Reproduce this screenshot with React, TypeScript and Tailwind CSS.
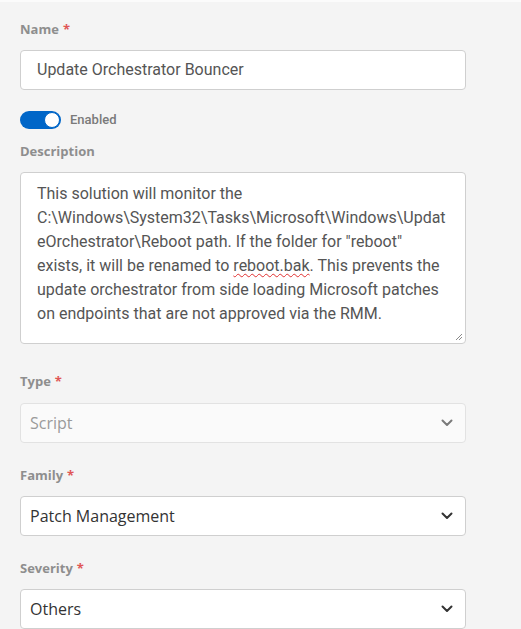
import type { ReactNode } from 'react'

const labelFont = { fontFamily: '"Open Sans", "Liberation Sans", sans-serif' }

function FieldLabel(props: { children: ReactNode; required?: boolean; className?: string }) {
  return (
    <div
      className={`h-5 text-[13px] font-bold leading-5 text-[#8e8e8e] ${props.className ?? ''}`}
      style={labelFont}
    >
      {props.children}
      {props.required && <span className="ml-1 text-[#e05656]">*</span>}
    </div>
  )
}

function Chevron(props: { color: string }) {
  return (
    <svg width="12" height="8" viewBox="0 0 12 8" fill="none" className="shrink-0">
      <path d="M1.5 1.5 L6 6 L10.5 1.5" stroke={props.color} strokeWidth="2" strokeLinecap="round" strokeLinejoin="round" />
    </svg>
  )
}

function SelectBox(props: { value: string; disabled?: boolean }) {
  const { value, disabled } = props
  return (
    <div
      className={`flex h-10 w-[446px] items-center justify-between rounded border pl-[9px] pr-3 text-base ${
        disabled ? 'border-[#e2e2e2] bg-[#fafafa] text-[#9a9a9a]' : 'border-[#cfcfcf] bg-white text-[#333]'
      }`}
      style={labelFont}
    >
      <span>{value}</span>
      <Chevron color={disabled ? '#7a7a7a' : '#333'} />
    </div>
  )
}

export default function App() {
  return (
    <div className="min-h-screen border-t-2 border-[#fbfbfb] bg-[#f4f4f4]" style={{ fontFamily: 'Roboto, "Liberation Sans", sans-serif' }}>
      <div className="px-5 pt-[17px]">
        <FieldLabel required>Name</FieldLabel>
        <div className="mt-[11px] flex h-10 w-[446px] items-center rounded border border-[#cfcfcf] bg-white px-4 text-base text-[#555]">
          Update Orchestrator Bouncer
        </div>

        <div className="mt-[21px] flex h-[18px] items-center gap-[9px]">
          <div className="flex h-[18px] w-[41px] items-center justify-end rounded-full bg-[#0066c8] px-px">
            <div className="h-4 w-4 rounded-full border border-[#0066c8] bg-white" />
          </div>
          <span className="text-[13px] font-medium text-[#7a7a7a]">Enabled</span>
        </div>

        <FieldLabel className="mt-3">Description</FieldLabel>
        <div className="relative mt-[11px] h-[172px] w-[446px] rounded border border-[#cfcfcf] bg-white pl-4 pr-[15px] pt-[9px] text-base leading-6 text-[#555] break-words">
          This solution will monitor the C:\Windows\System32\Tasks\Microsoft\Windows\UpdateOrchestrator\Reboot path. If the folder for "reboot" exists, it will be renamed to{' '}
          <span className="underline decoration-[#e03030] decoration-wavy decoration-1 underline-offset-2">reboot.bak</span>. This prevents the update orchestrator from side loading Microsoft patches on endpoints that are not approved via the RMM.
          <svg width="8" height="8" viewBox="0 0 8 8" className="absolute bottom-[2px] right-[2px]">
            <path d="M7 1 L1 7 M7 4 L4 7" stroke="#8a8a8a" strokeWidth="1" />
          </svg>
        </div>

        <FieldLabel required className="mt-[27px]">Type</FieldLabel>
        <div className="mt-3">
          <SelectBox value="Script" disabled />
        </div>

        <FieldLabel required className="mt-[22px]">Family</FieldLabel>
        <div className="mt-[11px]">
          <SelectBox value="Patch Management" />
        </div>

        <FieldLabel required className="mt-[22px]">Severity</FieldLabel>
        <div className="mt-[11px]">
          <SelectBox value="Others" />
        </div>
      </div>
    </div>
  )
}
